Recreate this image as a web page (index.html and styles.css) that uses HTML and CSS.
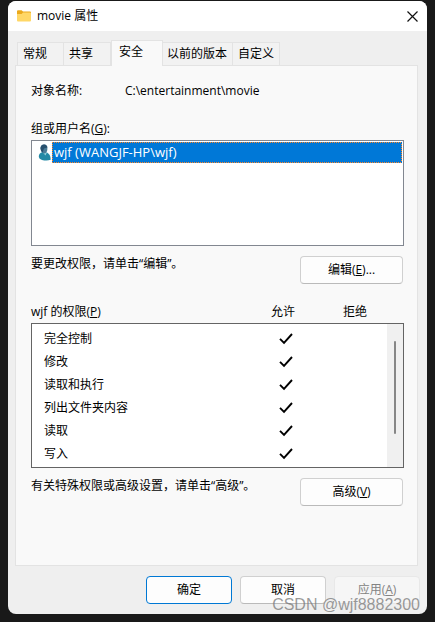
FILE: index.html
```html
<!DOCTYPE html>
<html lang="zh-CN">
<head>
  <meta charset="UTF-8" />
  <meta name="viewport" content="width=device-width, initial-scale=1.0"/>
  <title>movie 属性</title>
  <link rel="stylesheet" href="styles.css">
</head>
<body>
  <div class="window">
    <header class="titlebar">
      <svg class="folder" viewBox="0 0 14 12" width="14" height="12" aria-hidden="true">
        <path d="M0 1.2Q0 .3 1 .3H4.6L6 1.6H13Q14 1.6 14 2.6V6H0Z" fill="#eba91c"/>
        <path d="M0 4H4.6L6 2.6H13Q14 2.6 14 3.5V10.6Q14 11.6 13 11.6H1Q0 11.6 0 10.6Z" fill="#ffd766"/>
      </svg>
      <h1>movie 属性</h1>
      <button class="close" aria-label="关闭">
        <svg viewBox="0 0 11 11" width="11" height="11"><path d="M.5 .5L10.5 10.5M10.5 .5L.5 10.5" stroke="#111" stroke-width="1.2" fill="none"/></svg>
      </button>
    </header>

    <main class="content">
      <nav class="tabs">
        <button class="tab">常规</button>
        <button class="tab">共享</button>
        <button class="tab active">安全</button>
        <button class="tab wide">以前的版本</button>
        <button class="tab">自定义</button>
      </nav>

      <section class="panel">
        <div class="object">
          <span class="object-label">对象名称:</span>
          <span>C:\entertainment\movie</span>
        </div>

        <div class="caption" id="usersLabel">组或用户名(<u>G</u>):</div>
        <ul class="users" role="listbox" aria-labelledby="usersLabel" tabindex="0">
          <li class="user" role="option" aria-selected="true">
            <svg viewBox="0 0 13 17" width="13" height="17" aria-hidden="true">
              <path d="M.8 13Q.6 9 4.5 8L9 8.6Q12.8 10.6 12.6 15.8Q9 17.2 4 16Q1 15.2 .8 13Z" fill="#2389a5"/>
              <path d="M5 8.4L7.4 11.4L9 8.6Z" fill="#8fd0dc"/>
              <path d="M2.4 4.6Q2.4 .5 6 .4Q9.6 .6 9.4 4.7Q9.2 9 6.4 9.4Q3 9 2.4 4.6Z" fill="#4a7c97"/>
              <path d="M2.5 4Q3 .4 6.2 .4Q9.2 .6 9.4 3.6L6 4.4L4.6 8.4Q2.6 7 2.5 4Z" fill="#28506e"/>
            </svg>
            <span class="user-name">wjf (WANGJF-HP\wjf)</span>
          </li>
        </ul>

        <div class="hint">
          <p>要更改权限，请单击“编辑”。</p>
          <button class="btn">编辑(<u>E</u>)...</button>
        </div>

        <div class="perm-head">
          <span id="permLabel">wjf 的权限(<u>P</u>)</span>
          <span class="perm-col" id="allow">允许</span>
          <span class="perm-col" id="deny">拒绝</span>
        </div>
        <div class="perm-box">
          <table class="perms" aria-labelledby="permLabel">
            <tr><td><label for="p1">完全控制</label></td><td class="check"><input type="checkbox" id="p1" checked></td><td class="deny"></td></tr>
            <tr><td><label for="p2">修改</label></td><td class="check"><input type="checkbox" id="p2" checked></td><td class="deny"></td></tr>
            <tr><td><label for="p3">读取和执行</label></td><td class="check"><input type="checkbox" id="p3" checked></td><td class="deny"></td></tr>
            <tr><td><label for="p4">列出文件夹内容</label></td><td class="check"><input type="checkbox" id="p4" checked></td><td class="deny"></td></tr>
            <tr><td><label for="p5">读取</label></td><td class="check"><input type="checkbox" id="p5" checked></td><td class="deny"></td></tr>
            <tr><td><label for="p6">写入</label></td><td class="check"><input type="checkbox" id="p6" checked></td><td class="deny"></td></tr>
          </table>
          <div class="scrollbar"><div class="thumb"></div></div>
        </div>

        <div class="hint">
          <p>有关特殊权限或高级设置，请单击“高级”。</p>
          <button class="btn">高级(<u>V</u>)</button>
        </div>
      </section>
    </main>

    <footer class="actions">
      <button class="btn primary">确定</button>
      <button class="btn">取消</button>
      <button class="btn" disabled>应用(<u>A</u>)</button>
    </footer>
    <div class="watermark">CSDN @wjf8882300</div>
  </div>
</body>
</html>
```
FILE: styles.css
```css
* {
  box-sizing: border-box;
}
body {
  margin: 0;
  padding: 1px 8px 8px;
  background: #191919;
  color: #000;
  font-family: "Open Sans", "Noto Sans CJK SC", sans-serif;
  font-size: 12px;
  line-height: 16px;
}
button {
  font: inherit;
  color: inherit;
  padding: 0;
  cursor: pointer;
}
u { text-underline-offset: 1px; }
.window {
  position: relative;
  background: #efefef;
  border-radius: 8px;
  overflow: hidden;
}

/* title bar */
.titlebar {
  display: flex;
  align-items: center;
  height: 30px;
  padding: 0 9px;
  background: #fff;
}
.titlebar h1 {
  flex: 1;
  margin: 0 0 0 6px;
  font-size: 12px;
  font-weight: normal;
}
.close {
  display: flex;
  border: none;
  background: none;
}

/* tabs */
.content { padding: 9px 9px 0 7px; }
.tabs {
  display: flex;
  align-items: flex-end;
  padding-left: 2px;
}
.tab {
  width: 47px;
  height: 23px;
  padding: 0 5px;
  text-align: left;
  white-space: nowrap;
  border: 1px solid #e3e3e3;
  border-width: 1px 1px 0 0;
  background: #f2f2f2;
}
.tab:first-child { border-left-width: 1px; }
.tab.wide {
  width: 70px;
  padding: 0 4px;
}
.tab.active {
  width: 52px;
  height: 26px;
  margin-bottom: -1px;
  padding: 0 7px 3px;
  border-left-width: 1px;
  background: #f9f9f9;
  z-index: 1;
}
.panel {
  padding: 17px 13px 59px 15px;
  border: 1px solid #e3e3e3;
  background: #f9f9f9;
}
.object { display: flex; }
.object-label { width: 94px; }
.caption { margin-top: 22px; }

/* user list */
.users {
  height: 106px;
  margin: 3px 0 10px;
  padding: 1px;
  list-style: none;
  border: 1px solid #828790;
  background: #fff;
}
.user {
  display: flex;
  gap: 1px;
  padding-left: 5px;
}
.user svg { margin-top: 2px; }
/* focus ring: one pixel on, one pixel off */
.user-name {
  flex: 1;
  height: 21px;
  padding: 2px;
  background:
    repeating-linear-gradient(90deg, #ff8728 0 1px, #0078d7 1px 2px) top / 100% 1px no-repeat,
    repeating-linear-gradient(90deg, #ff8728 0 1px, #0078d7 1px 2px) bottom / 100% 1px no-repeat,
    repeating-linear-gradient(#ff8728 0 1px, #0078d7 1px 2px) left / 1px 100% no-repeat,
    repeating-linear-gradient(#ff8728 0 1px, #0078d7 1px 2px) right / 1px 100% no-repeat,
    #0078d7;
  color: #fff;
  font-size: 13px;
}

.hint {
  display: flex;
  justify-content: space-between;
  padding-right: 1px;
}
.hint p { margin: 0; }
.btn {
  width: 103px;
  height: 28px;
  border: 1px solid #d0d0d0;
  border-bottom-color: #bababa;
  border-radius: 4px;
  background: #fdfdfd;
}

/* permissions */
.perm-head {
  display: flex;
  margin-top: 20px;
  padding-right: 13px;
}
.perm-head span:first-child { flex: 1; }
.perm-col {
  width: 72px;
  text-align: center;
}
.perm-box {
  display: flex;
  margin: 3px 0 10px;
  border: 1px solid #646464;
  background: #fff;
}
.perms {
  flex: 1;
  margin: 3px 0 2px;
  border-collapse: collapse;
}
.perms td {
  height: 23px;
  padding: 0 0 0 12px;
}
.perms .check {
  width: 72px;
  padding: 0;
}
.perms .deny {
  width: 36px;
  padding: 0;
}
.check input {
  display: block;
  appearance: none;
  width: 14px;
  height: 12px;
  margin: 0;
}
.check input:checked {
  background: url("data:image/svg+xml,%3Csvg xmlns='http://www.w3.org/2000/svg' viewBox='0 0 14 12'%3E%3Cpath d='M1 5.8L5 9.8L13 1' fill='none' stroke='%23000' stroke-width='1.9'/%3E%3C/svg%3E");
}
.scrollbar {
  width: 16px;
  padding: 17px 7px 33px;
  background: #f0f0f0;
}
.thumb {
  height: 100%;
  border-radius: 1px;
  background: #868686;
}

/* bottom buttons */
.actions {
  display: flex;
  justify-content: flex-end;
  gap: 8px;
  padding: 10px 7px;
}
.actions .btn { width: 86px; }
.actions .primary { border-color: #0078d4; }
.actions .btn:disabled {
  color: #838383;
  border-color: #e8e8e8;
  background: #f6f6f6;
}
.watermark {
  position: absolute;
  right: 7px;
  bottom: 1px;
  font-family: "Liberation Sans", Arial, sans-serif;
  font-size: 16px;
  color: rgba(120, 120, 120, 0.75);
  pointer-events: none;
}
```
